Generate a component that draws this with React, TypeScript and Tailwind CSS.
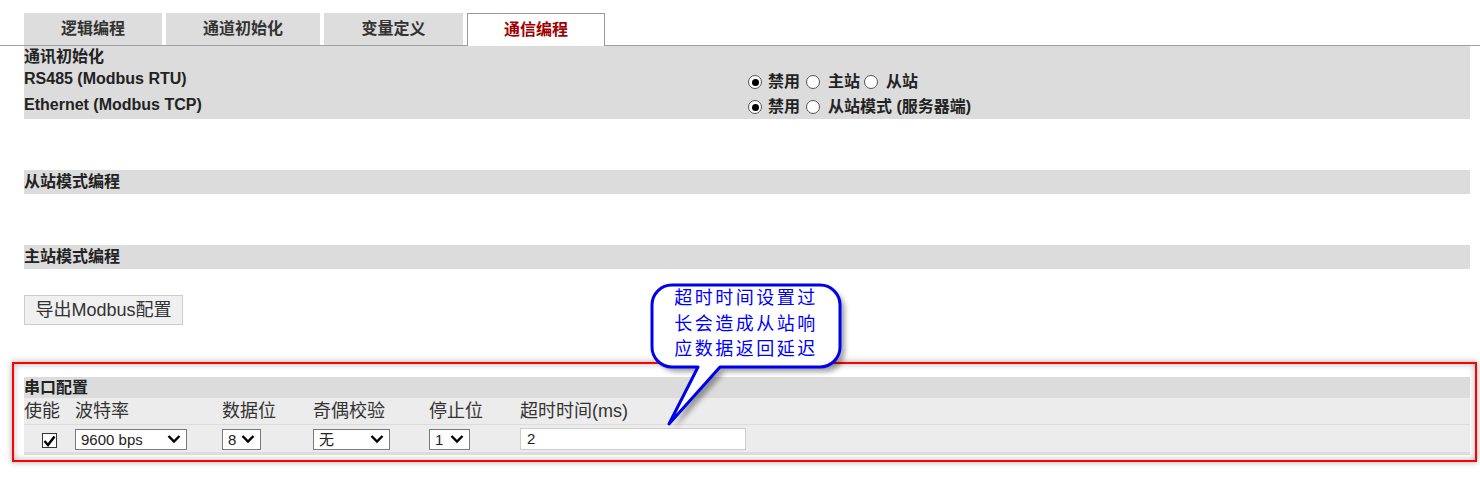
import React from "react";

const FONT = { fontFamily: '"Liberation Sans", Arial, "Noto Sans CJK SC", sans-serif' };

function Radio({ checked }: { checked?: boolean }) {
  return (
    <span className="inline-flex h-[14px] w-[14px] shrink-0 items-center justify-center rounded-full border border-[#555] bg-white">
      {checked && <span className="h-[7px] w-[7px] rounded-full bg-black" />}
    </span>
  );
}

function Chevron() {
  return (
    <svg width="14" height="10" viewBox="0 0 14 10" className="shrink-0">
      <path d="M1.5 2 L7 7.5 L12.5 2" fill="none" stroke="#000" strokeWidth="2.4" />
    </svg>
  );
}

function Select({ value, width }: { value: string; width: number }) {
  return (
    <div
      className="flex h-[21px] items-center justify-between border border-[#7a7a7a] bg-white pl-[5px] pr-[5px] text-[15px] text-[#222]"
      style={{ width }}
    >
      <span className="leading-none">{value}</span>
      <Chevron />
    </div>
  );
}

const tabs = [
  { label: "逻辑编程", w: 138 },
  { label: "通道初始化", w: 154 },
  { label: "变量定义", w: 139 },
  { label: "通信编程", w: 138, active: true },
];

export default function App() {
  return (
    <div className="relative h-[489px] w-[1480px] overflow-hidden bg-white text-[#222]" style={FONT}>
      {/* Tabs */}
      <div className="mt-[13px] flex h-[33px] items-end gap-[4px] border-b border-[#a0a0a0] pl-[24px]">
        {tabs.map((t) =>
          t.active ? (
            <div
              key={t.label}
              className="mb-[-1px] flex h-[33px] items-center justify-center border border-b-0 border-[#999] bg-white text-[16px] font-bold text-[#a00000]"
              style={{ width: t.w }}
            >
              {t.label}
            </div>
          ) : (
            <div
              key={t.label}
              className="flex h-[32px] items-center justify-center bg-[#dddddd] text-[16px] font-bold text-[#333]"
              style={{ width: t.w }}
            >
              {t.label}
            </div>
          )
        )}
      </div>

      {/* 通讯初始化 panel */}
      <div className="ml-[24px] h-[73px] w-[1446px] bg-[#dcdcdc]">
        <div className="h-[21px] text-[16px] font-bold leading-[21px] text-[#222]">通讯初始化</div>
        <div className="grid h-[26px] grid-cols-[724px_1fr] items-center">
          <div className="mb-[6px] text-[16px] font-bold text-[#222]">RS485 (Modbus RTU)</div>
          <div className="flex items-center text-[16px] font-bold text-[#222]">
            <Radio checked />
            <span className="ml-[6px] mr-[6px]">禁用</span>
            <Radio />
            <span className="ml-[8px] mr-[4px]">主站</span>
            <Radio />
            <span className="ml-[8px]">从站</span>
          </div>
        </div>
        <div className="grid h-[26px] grid-cols-[724px_1fr] items-center">
          <div className="mb-[4px] text-[16px] font-bold text-[#222]">Ethernet (Modbus TCP)</div>
          <div className="flex items-center text-[16px] font-bold text-[#222]">
            <Radio checked />
            <span className="ml-[6px] mr-[6px]">禁用</span>
            <Radio />
            <span className="ml-[8px]">从站模式 (服务器端)</span>
          </div>
        </div>
      </div>

      {/* 从站模式编程 */}
      <div className="ml-[24px] mt-[51px] h-[24px] w-[1446px] bg-[#dcdcdc] text-[16px] font-bold leading-[24px] text-[#222]">
        从站模式编程
      </div>

      {/* 主站模式编程 */}
      <div className="ml-[24px] mt-[51px] h-[24px] w-[1446px] bg-[#dcdcdc] text-[16px] font-bold leading-[24px] text-[#222]">
        主站模式编程
      </div>

      {/* Export button */}
      <div className="ml-[24px] mt-[26px] flex h-[30px] w-[159px] items-center justify-center border border-[#cccccc] bg-[#f0f0f0] text-[18px] text-[#333]">
        导出Modbus配置
      </div>

      {/* Serial config, red box */}
      <div className="ml-[12px] mt-[37px] h-[100px] w-[1465px] border-2 border-[#ff0000] pl-[10px] pr-[5px] pt-[13px] shadow-[0_0_6px_rgba(0,0,0,0.35),inset_0_0_6px_rgba(0,0,0,0.3)]">
        <div className="h-[21px] bg-[#dcdcdc] text-[16px] font-bold leading-[22px] text-[#222]">串口配置</div>
        <div className="bg-[#ececec]">
          <div className="grid h-[26px] grid-cols-[51px_147px_91px_116px_91px_226px] items-center text-[18px] text-[#333]">
            <span>使能</span>
            <span>波特率</span>
            <span>数据位</span>
            <span>奇偶校验</span>
            <span>停止位</span>
            <span>超时时间(ms)</span>
          </div>
          <div className="grid h-[31px] grid-cols-[51px_147px_91px_116px_91px_226px] items-center border-t border-[#dcdcdc] border-b-[3px] pt-[1px]">
            <div className="flex justify-center pt-[3px]">
              <div className="flex h-[15px] w-[15px] items-center justify-center border border-[#333] bg-white">
                <svg width="13" height="12" viewBox="0 0 13 12">
                  <path d="M1.5 6 L5 10 L11.5 1.5" fill="none" stroke="#000" strokeWidth="2.4" />
                </svg>
              </div>
            </div>
            <Select value="9600 bps" width={112} />
            <Select value="8" width={39} />
            <Select value="无" width={77} />
            <Select value="1" width={41} />
            <div className="flex h-[22px] w-[226px] items-center border border-[#cccccc] bg-white pl-[6px] text-[15px] text-[#222]">
              2
            </div>
          </div>
        </div>
      </div>

      {/* Callout */}
      <div className="absolute left-[648px] top-[283px] h-[150px] w-[205px]">
        <svg width="205" height="150" viewBox="0 0 205 150" className="absolute left-0 top-0">
          <defs>
            <filter id="blur" x="-20%" y="-20%" width="140%" height="140%">
              <feGaussianBlur stdDeviation="2.5" />
            </filter>
          </defs>
          <path
            d="M24 2 H172 A20 20 0 0 1 192 22 V64 A20 20 0 0 1 172 84 H72 L21 141 L50 84 H24 A20 20 0 0 1 4 64 V22 A20 20 0 0 1 24 2 Z"
            fill="rgba(0,0,0,0.35)"
            transform="translate(5 5)"
            filter="url(#blur)"
          />
          <path
            d="M24 2 H172 A20 20 0 0 1 192 22 V64 A20 20 0 0 1 172 84 H72 L21 141 L50 84 H24 A20 20 0 0 1 4 64 V22 A20 20 0 0 1 24 2 Z"
            fill="#ffffff"
            stroke="#0000ee"
            strokeWidth="3"
            strokeLinejoin="round"
          />
        </svg>
        <div className="absolute left-[4px] top-[3px] w-[188px] text-center text-[18px] leading-[25.5px] tracking-[2.5px] text-[#0000ff]">
          <div>超时时间设置过</div>
          <div>长会造成从站响</div>
          <div>应数据返回延迟</div>
        </div>
      </div>
    </div>
  );
}
